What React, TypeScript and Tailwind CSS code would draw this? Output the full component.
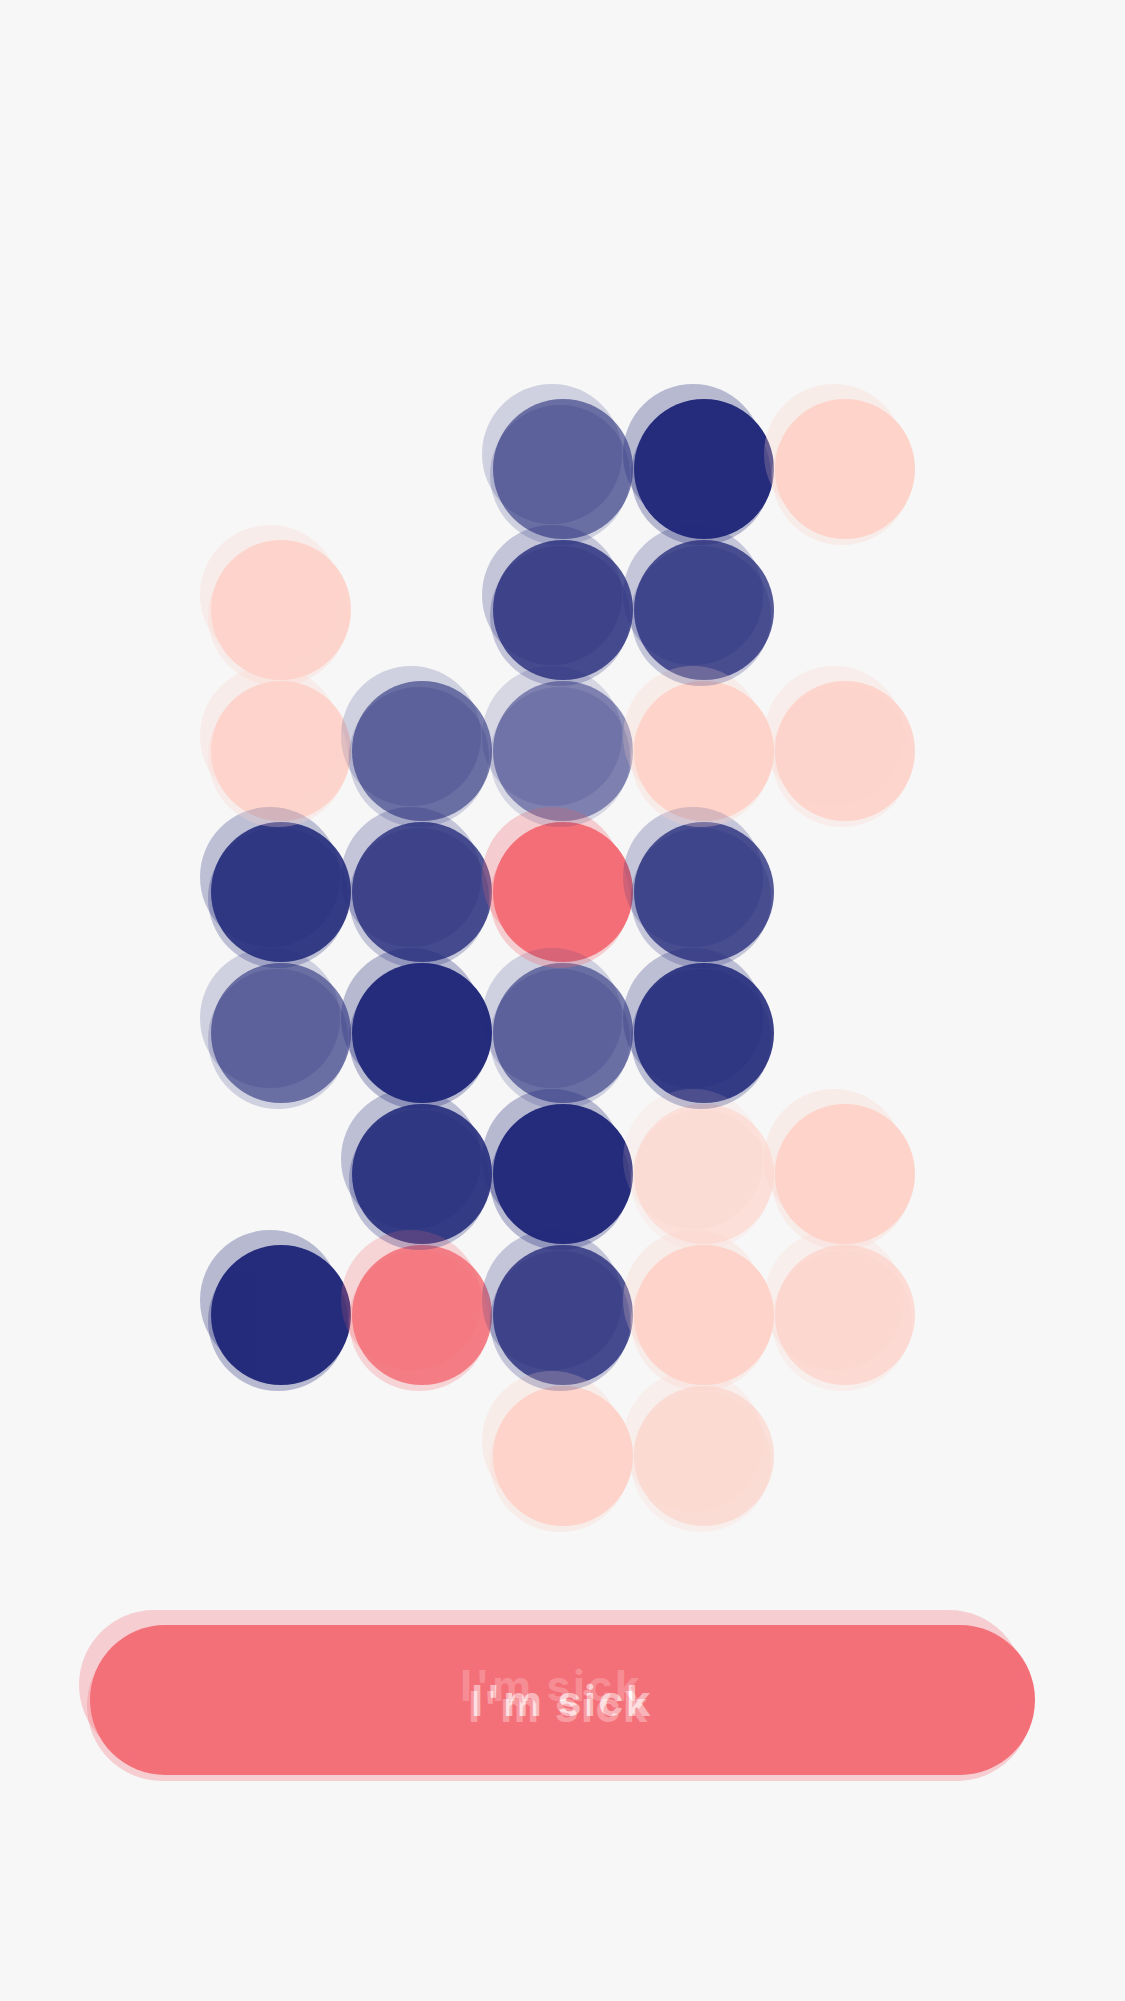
const N = "bg-[#252c7c]"
const P = "bg-[#fdd3ca]"
const R = "bg-[#f36e77]"

// each row: 5 slots, null = empty
const rows: (string | null)[][] = [
  [null, null, `${N} opacity-60`, `${N} opacity-100`, `${P} opacity-100`],
  [`${P} opacity-95`, null, `${N} opacity-80`, `${N} opacity-[0.78]`, null],
  [`${P} opacity-95`, `${N} opacity-60`, `${N} opacity-50`, `${P} opacity-100`, `${P} opacity-90`],
  [`${N} opacity-90`, `${N} opacity-80`, `${R} opacity-100`, `${N} opacity-[0.78]`, null],
  [`${N} opacity-60`, `${N} opacity-100`, `${N} opacity-60`, `${N} opacity-90`, null],
  [null, `${N} opacity-90`, `${N} opacity-100`, `${P} opacity-60`, `${P} opacity-100`],
  [`${N} opacity-100`, `${R} opacity-[0.85]`, `${N} opacity-80`, `${P} opacity-100`, `${P} opacity-75`],
  [null, null, `${P} opacity-100`, `${P} opacity-[0.65]`, null],
]

function Scene() {
  return (
    <div className="flex flex-col items-center pt-[399px]">
      <div className="grid grid-cols-[repeat(5,140px)] auto-rows-[140px] gap-px">
        {rows.flat().map((cls, i) =>
          cls ? <div key={i} className={`h-[140px] w-[140px] rounded-full ${cls}`} /> : <div key={i} />
        )}
      </div>
      <button className="mt-[99px] flex h-[150px] w-[945px] items-center justify-center rounded-full bg-[#f47079]">
        <span className="font-['Inter',sans-serif] text-[42px] font-bold tracking-[3px] text-white">I'm sick</span>
      </button>
    </div>
  )
}

export default function App() {
  return (
    <div className="relative h-[2001px] overflow-hidden bg-[#f7f7f7]">
      <Scene />
      <div className="pointer-events-none absolute inset-0 -translate-x-[11px] -translate-y-[15px] opacity-30">
        <Scene />
      </div>
      <div className="pointer-events-none absolute inset-0 -translate-x-[3px] translate-y-[6px] opacity-30">
        <Scene />
      </div>
    </div>
  )
}
